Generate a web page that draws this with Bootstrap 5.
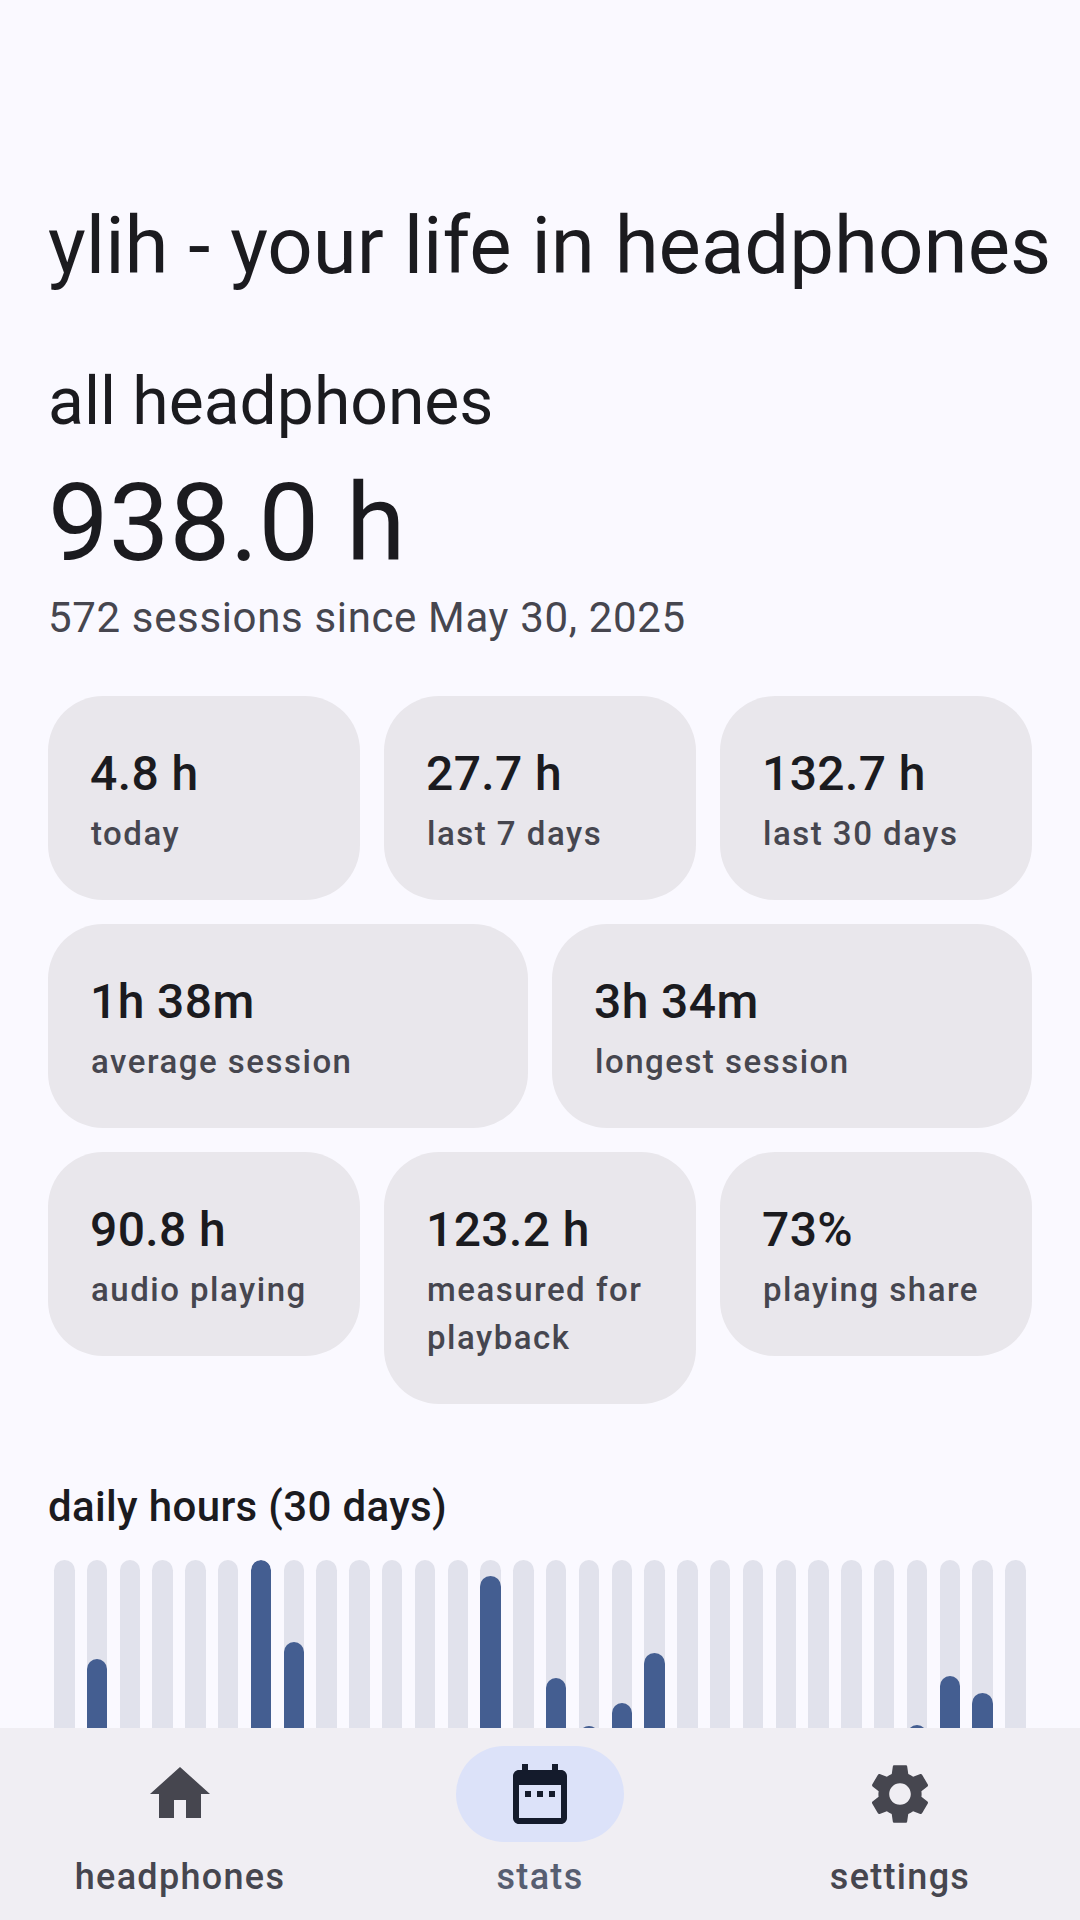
<!DOCTYPE html>
<html lang="en">
<head>
<meta charset="UTF-8">
<meta name="viewport" content="width=device-width, initial-scale=1">
<link href="https://cdn.jsdelivr.net/npm/bootstrap@5.3.3/dist/css/bootstrap.min.css" rel="stylesheet">
<script src="https://cdn.jsdelivr.net/npm/bootstrap@5.3.3/dist/js/bootstrap.bundle.min.js"></script>
<title>ylih</title>
<style>
html, body { height: 1920px; overflow: hidden; }
body { background: #faf9ff; font-family: Roboto, sans-serif; color: #1b1b1f; }
.app-screen { height: 1920px; width: 1080px; overflow: hidden; }
.app-scroll { height: 1728px; overflow: hidden; padding: 0 48px 0 48px; flex: none; }
.app-title { font-size: 79.8px; font-weight: 400; line-height: 105px; padding-top: 193px; margin: 0; white-space: nowrap; }
.all-label { font-size: 66px; line-height: 84px; margin: 62px 0 0; font-weight: 400; }
.total-hours { font-size: 108px; line-height: 136px; margin: 11px 0 0; }
.total-sub { font-size: 42px; line-height: 58px; color: #46464f; letter-spacing: 0.65px; margin: -2px 0 49px; }
.stat-row { display: flex; gap: 24px; align-items: flex-start; margin-bottom: 24px; }
.stat-box { flex: 1 1 0; min-width: 0; background: #e9e7ec; border-radius: 55px; padding: 42px; min-height: 204px; }
.stat-val { font-size: 48px; font-weight: 500; line-height: 72px; letter-spacing: 0.4px; }
.stat-lbl { font-size: 33px; font-weight: 500; line-height: 48px; color: #46464f; letter-spacing: 1.5px; padding-left: 1px; }
.chart-title { font-size: 42px; font-weight: 500; line-height: 58px; letter-spacing: 0.35px; margin: 74px 0 24px; }
.bar-row { display: flex; justify-content: space-between; padding: 0 6px; }
.bar-track { width: 20.5px; height: 315px; border-radius: 11px; background: #e1e2ec; overflow: hidden; position: relative; }
.bar-fill { position: absolute; left: 0; right: 0; bottom: 0; background: #445e91; border-radius: 11px 11px 0 0; }
.tab-bar { height: 192px; background: #f0eef3; display: flex; flex: none; }
.tab-item { flex: 1 1 0; display: flex; flex-direction: column; align-items: center; padding-top: 18px; }
.tab-icon { width: 168px; height: 96px; border-radius: 48px; display: flex; align-items: center; justify-content: center; }
.tab-icon svg { width: 72px; height: 72px; fill: #46464f; }
.tab-on .tab-icon { background: #dce2f9; }
.tab-on .tab-icon svg { fill: #141b2c; }
.tab-lbl { font-size: 36px; font-weight: 500; line-height: 48px; color: #46464f; letter-spacing: 1.3px; margin-top: 11px; }
.tab-on .tab-lbl { color: #575e71; }
</style>
</head>
<body>
<div class="app-screen d-flex flex-column">
    <div class="app-scroll">
        <h1 class="app-title">ylih - your life in headphones</h1>
        <h2 class="all-label">all headphones</h2>
        <p class="total-hours">938.0 h</p>
        <p class="total-sub">572 sessions since May 30, 2025</p>

        <div class="stat-row">
            <div class="stat-box"><div class="stat-val">4.8 h</div><div class="stat-lbl">today</div></div>
            <div class="stat-box"><div class="stat-val">27.7 h</div><div class="stat-lbl">last 7 days</div></div>
            <div class="stat-box"><div class="stat-val">132.7 h</div><div class="stat-lbl">last 30 days</div></div>
        </div>
        <div class="stat-row">
            <div class="stat-box"><div class="stat-val">1h 38m</div><div class="stat-lbl">average session</div></div>
            <div class="stat-box"><div class="stat-val">3h 34m</div><div class="stat-lbl">longest session</div></div>
        </div>
        <div class="stat-row">
            <div class="stat-box"><div class="stat-val">90.8 h</div><div class="stat-lbl">audio playing</div></div>
            <div class="stat-box"><div class="stat-val">123.2 h</div><div class="stat-lbl">measured for playback</div></div>
            <div class="stat-box"><div class="stat-val">73%</div><div class="stat-lbl">playing share</div></div>
        </div>

        <h3 class="chart-title">daily hours (30 days)</h3>
        <div class="bar-row" id="bars"></div>
    </div>
    <div class="tab-bar">
        <div class="tab-item">
            <div class="tab-icon"><svg viewBox="0 0 24 24"><path d="M10 20v-6h4v6h5v-8h3L12 3 2 12h3v8z"/></svg></div>
            <div class="tab-lbl">headphones</div>
        </div>
        <div class="tab-item tab-on">
            <div class="tab-icon"><svg viewBox="0 0 24 24"><path fill-rule="evenodd" d="M19 4h-1V2h-2v2H8V2H6v2H5c-1.1 0-2 .9-2 2v14c0 1.1.9 2 2 2h14c1.1 0 2-.9 2-2V6c0-1.1-.9-2-2-2zm0 16H5V9h14v11zM7 11h2v2H7zm4 0h2v2h-2zm4 0h2v2h-2z"/></svg></div>
            <div class="tab-lbl">stats</div>
        </div>
        <div class="tab-item">
            <div class="tab-icon"><svg viewBox="0 0 24 24"><path d="M19.14 12.94c.04-.3.06-.61.06-.94 0-.32-.02-.64-.07-.94l2.03-1.58c.18-.14.23-.41.12-.61l-1.92-3.32c-.12-.22-.37-.29-.59-.22l-2.39.96c-.5-.38-1.03-.7-1.62-.94l-.36-2.54c-.04-.24-.24-.41-.48-.41h-3.84c-.24 0-.43.17-.47.41l-.36 2.54c-.59.24-1.13.57-1.62.94l-2.39-.96c-.22-.08-.47 0-.59.22L2.74 8.87c-.12.21-.08.47.12.61l2.03 1.58c-.05.3-.09.63-.09.94s.02.64.07.94l-2.03 1.58c-.18.14-.23.41-.12.61l1.92 3.32c.12.22.37.29.59.22l2.39-.96c.5.38 1.03.7 1.62.94l.36 2.54c.05.24.24.41.48.41h3.84c.24 0 .44-.17.47-.41l.36-2.54c.59-.24 1.13-.56 1.62-.94l2.39.96c.22.08.47 0 .59-.22l1.92-3.32c.12-.22.07-.47-.12-.61l-2.01-1.58zM12 15.6c-1.98 0-3.6-1.62-3.6-3.6s1.62-3.6 3.6-3.6 3.6 1.62 3.6 3.6-1.62 3.6-3.6 3.6z"/></svg></div>
            <div class="tab-lbl">settings</div>
        </div>
    </div>
</div>
<script>
    // px of fill per day, measured from the top of the 315px track
    const dayTops = {1:99, 6:0, 7:82, 13:16, 15:118, 16:166, 17:143, 18:93, 26:165, 27:116, 28:133};
    const bars = document.getElementById("bars");
    for (let i = 0; i < 30; i++) {
        const track = document.createElement("div");
        track.className = "bar-track";
        if (dayTops[i] !== undefined) {
            const fill = document.createElement("div");
            fill.className = "bar-fill";
            fill.style.top = dayTops[i] + "px";
            track.appendChild(fill);
        }
        bars.appendChild(track);
    }
</script>
</body>
</html>
